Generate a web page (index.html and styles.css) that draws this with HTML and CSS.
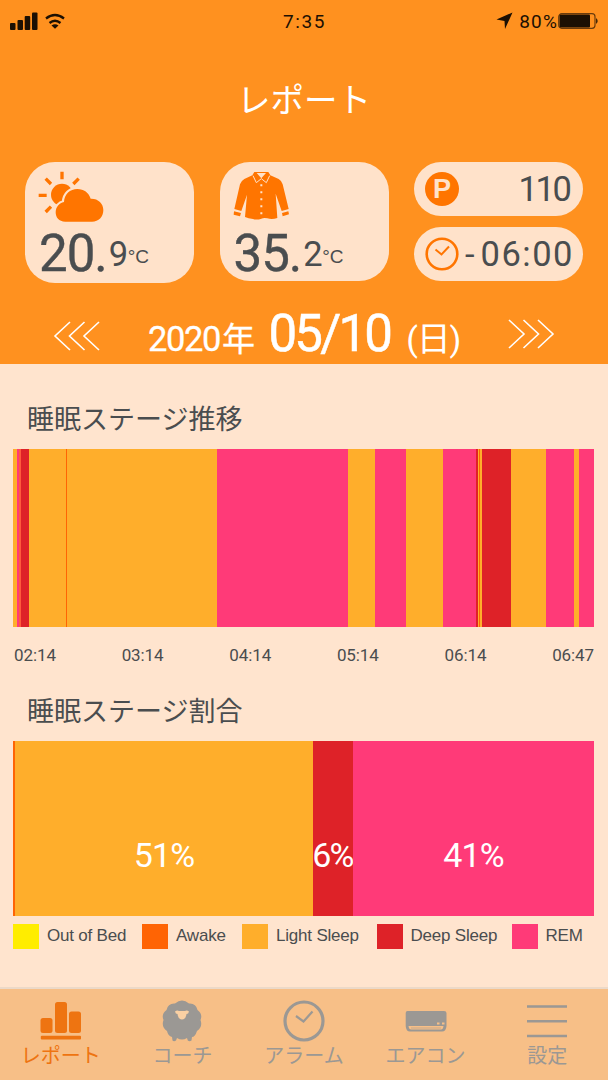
FILE: index.html
```html
<!DOCTYPE html>
<html lang="ja">

<head>
    <meta charset="UTF-8">
    <meta name="viewport" content="width=device-width, initial-scale=1.0">
    <title>レポート</title>
    <link rel="stylesheet" href="styles.css">
</head>

<body>

    <header class="header">
        <div class="status-bar">
            <div class="status-left">
                <svg width="56" height="20" viewBox="0 0 56 20">
                    <rect x="0" y="12" width="5.5" height="7" rx="1" />
                    <rect x="7.5" y="9" width="5.5" height="10" rx="1" />
                    <rect x="14.7" y="5" width="5.5" height="14" rx="1" />
                    <rect x="22" y="1.5" width="5.5" height="17.5" rx="1" />
                    <path d="M36 7.5 Q45 0.5 54 7.5 M39.5 12 Q45 7.5 50.5 12" fill="none" stroke="#1c1003" stroke-width="2.3" />
                    <path d="M41.5 14.5 Q45 12 48.5 14.5 L45 17.8 Z" />
                </svg>
            </div>
            <div class="status-time">7:35</div>
            <div class="status-right">
                <svg width="17" height="18" viewBox="0 0 17 18">
                    <path d="M0.5 7.5 L16.5 0.5 L9 17 L8.5 9 Z" />
                </svg>
                <span class="battery-text">80%</span>
                <svg width="41" height="18" viewBox="0 0 41 18">
                    <rect x="0.7" y="1.7" width="36.3" height="14.6" rx="3" fill="none" stroke="#6b3c0c" stroke-width="1.2" />
                    <rect x="1.5" y="2.5" width="30.5" height="13" rx="1" />
                    <path d="M38.2 6 Q41 9 38.2 12 Z" />
                </svg>
            </div>
        </div>

        <h1>レポート</h1>

        <div class="cards">
            <div class="card card-room">
                <svg width="66" height="52" viewBox="70 64 198 156">
                    <g stroke="#ff7500" stroke-width="10">
                        <path d="M142 66 V89 M93 87 L109 103 M192 87 L176 103 M72 137 H96 M93 187 L109 171" />
                    </g>
                    <circle cx="142" cy="135" r="33" />
                    <path d="M152 216 C132 216 123 203 123 188 C123 172 134 160 148 157 C149 134 166 118 188 118 C208 118 222 129 228 147 C250 146 266 161 266 181 C266 202 252 216 232 216 Z" stroke="#ffe2ca" stroke-width="13" paint-order="stroke" />
                </svg>
                <div class="temp">20.<span class="decimal">9</span><span class="unit">°C</span></div>
            </div>
            <div class="card card-bed">
                <svg width="57" height="49" viewBox="67 64 171 147">
                    <path d="M131 67 H173 L179 77 L204 88 Q213 93 216 104 L234 178 L213 184 L195 132 L200 205 Q184 211 170 206 Q160 203 152 207 Q139 212 127 208 Q113 206 103 202 L109 135 L92 184 L71 178 L88 104 Q92 93 101 88 L125 77 Z" />
                    <path d="M70 185 L91 190 L88 200 L69 195 Z M214 190 L233 185 L235 194 L216 200 Z" />
                    <path d="M138 70 H166 L152 86 Z" fill="#ffe2ca" />
                    <path d="M127 78 L137 99 L152 87 L167 99 L177 78" fill="none" stroke="#ffe2ca" stroke-width="3" />
                    <path d="M152 104 V200" fill="none" stroke="#ffe2ca" stroke-width="6" stroke-dasharray="6 15" />
                </svg>
                <div class="temp">35.<span class="decimal">2</span><span class="unit">°C</span></div>
            </div>
            <div class="pills">
                <div class="pill">
                    <span class="point-badge">P</span>
                    <span class="points"><span class="tight">11</span>0</span>
                </div>
                <div class="pill">
                    <svg width="34" height="34" viewBox="0 0 34 34">
                        <circle cx="17" cy="17" r="15.3" fill="none" stroke="#ff7500" stroke-width="2.6" />
                        <path d="M10.5 12.5 L16.5 17.5 L24 9.5" fill="none" stroke="#ff7500" stroke-width="2" />
                    </svg>
                    <span class="dash">-</span>
                    <span class="clock-time">06:00</span>
                </div>
            </div>
        </div>

        <div class="date-nav">
            <svg class="prev" width="48" height="30" viewBox="0 0 48 30">
                <path d="M17 1 L2 15 L17 29 M31.5 1 L16.5 15 L31.5 29 M46 1 L31 15 L46 29" />
            </svg>
            <div class="date">
                <span class="year">2020<span class="nen">年</span></span>
                <span class="day">05/10</span>
                <span class="weekday">(日)</span>
            </div>
            <svg class="next" width="48" height="30" viewBox="0 0 48 30">
                <path d="M2 1 L17 15 L2 29 M16.5 1 L31.5 15 L16.5 29 M31 1 L46 15 L31 29" />
            </svg>
        </div>
    </header>

    <main class="content">
        <h2>睡眠ステージ推移</h2>
        <div class="chart timeline" id="timeline"></div>
        <div class="time-labels">
            <span>02:14</span>
            <span>03:14</span>
            <span>04:14</span>
            <span>05:14</span>
            <span>06:14</span>
            <span>06:47</span>
        </div>

        <h2>睡眠ステージ割合</h2>
        <div class="chart ratio">
            <div class="awake"></div>
            <div class="light">51%</div>
            <div class="deep">6%</div>
            <div class="rem">41%</div>
        </div>
        <div class="legend">
            <div class="legend-item"><i class="out"></i>Out of Bed</div>
            <div class="legend-item"><i class="awake"></i>Awake</div>
            <div class="legend-item"><i class="light"></i>Light Sleep</div>
            <div class="legend-item"><i class="deep"></i>Deep Sleep</div>
            <div class="legend-item"><i class="rem"></i>REM</div>
        </div>
    </main>

    <nav class="tab-bar">
        <div class="tab active">
            <svg width="42" height="42" viewBox="0 0 42 42">
                <rect x="0.5" y="18" width="12" height="15" rx="2.5" />
                <rect x="15" y="2" width="12" height="31" rx="2.5" />
                <rect x="29" y="11.5" width="12" height="21.5" rx="2.5" />
                <rect x="0.8" y="35.8" width="40.2" height="3.6" rx="1" />
            </svg>
            <span>レポート</span>
        </div>
        <div class="tab">
            <svg width="42" height="42" viewBox="0 0 42 42">
                <path d="M14 3.5 Q21 -2.5 28 3.5 Q35 3 36.5 10 Q42 14 39.5 20 Q42 27 36 31 Q34 37 31 37 L30.5 40.5 Q28.5 42 26.8 40.5 L26 38 Q21 41 16 38 L15 40.5 Q13 42 11.5 40.5 L11 37 Q7 36 6 31 Q0 27 2.5 20 Q0 14 5.5 10 Q7 3 14 3.5 Z" />
                <path d="M14 11.5 Q16 10 18 11 H24 Q26 10 28 11.5 Q27.5 14 25.5 14 Q25 19 21 19.5 Q17 19 16.5 14 Q14.5 14 14 11.5 Z" fill="#fad0a3" />
            </svg>
            <span>コーチ</span>
        </div>
        <div class="tab">
            <svg width="42" height="42" viewBox="0 0 42 42">
                <circle cx="21" cy="21" r="19" fill="none" stroke="#9b9894" stroke-width="3.2" />
                <path d="M13 16 L20.5 21.5 L29.5 11.5" fill="none" stroke="#9b9894" stroke-width="2.2" />
            </svg>
            <span>アラーム</span>
        </div>
        <div class="tab">
            <svg width="42" height="42" viewBox="0 0 42 42">
                <path d="M2.5 11 H39 Q41.5 11 41.5 13 V26 Q41 31.5 37 31.5 H5 Q1 31.5 0.7 26 V13 Q0.7 11 2.5 11 Z" />
                <path d="M3.5 26 H38.5 Q38 29.5 36 29.5 H6 Q4 29.5 3.5 26 Z" fill="#f7bf87" />
                <path d="M32 23.5 H34.5 M37 23.5 H39.5" stroke="#f7bf87" stroke-width="2" />
                <path d="M6 28 H36" stroke="#b9a58f" stroke-width="0.8" />
            </svg>
            <span>エアコン</span>
        </div>
        <div class="tab">
            <svg width="42" height="42" viewBox="0 0 42 42">
                <path d="M1 6.5 H41 M1 21.3 H41 M1 36 H41" stroke="#9b9894" stroke-width="2.6" />
            </svg>
            <span>設定</span>
        </div>
    </nav>

    <script>
        // [stage, width] from 02:14 to 06:47
        const stages = [
            ['light', 4], ['rem', 2], ['rise', 2], ['deep', 8],
            ['light', 37], ['awake', 1], ['light', 150], ['rem', 131],
            ['light', 27], ['rem', 31], ['light', 37], ['rem', 33],
            ['deep', 2], ['light', 1], ['awake', 1], ['light', 2.5],
            ['deep', 28.5], ['light', 35], ['rem', 28], ['light', 5],
            ['rem', 15]
        ];
        const total = stages.reduce((sum, s) => sum + s[1], 0);
        const timeline = document.getElementById('timeline');

        stages.forEach(([stage, width]) => {
            const bar = document.createElement('div');
            bar.className = stage;
            bar.style.width = `${(width / total) * 100}%`;
            timeline.appendChild(bar);
        });
    </script>

</body>

</html>
```
FILE: styles.css
```css
* {
    box-sizing: border-box;
}

body {
    font-family: Roboto, 'Noto Sans CJK JP', sans-serif;
    background-color: #ffe4ce;
    color: #4a4d4f;
    margin: 0;
    width: 608px;
    height: 1080px;
    display: flex;
    flex-direction: column;
    overflow: hidden;
}

svg {
    display: block;
    flex: none;
}

/* Header */
.header {
    height: 364px;
    background-color: #ff911f;
    color: #fff;
}

.status-bar {
    height: 41px;
    padding: 0 9px 0 10px;
    display: grid;
    grid-template-columns: 1fr 60px 1fr;
    align-items: center;
    color: #1c1003;
    fill: #1c1003;
    font-size: 19px;
    letter-spacing: 1.6px;
}

.status-time {
    padding-top: 1px;
    text-align: center;
}

.status-right {
    display: flex;
    align-items: center;
    justify-content: flex-end;
}

.battery-text {
    margin: 1px 0 0 6px;
    letter-spacing: 1.2px;
}

h1 {
    margin: 0;
    height: 121px;
    line-height: 119px;
    font-size: 33.5px;
    font-weight: 400;
    text-align: center;
}

.cards {
    height: 122px;
    padding: 0 25px;
    display: flex;
    align-items: flex-start;
    justify-content: space-between;
    color: #4a4d4f;
    fill: #ff7500;
}

.card {
    width: 169px;
    height: 121px;
    padding: 9px 0 0 13px;
    border-radius: 30px;
    background-color: #ffe2ca;
}

.card-bed {
    height: 119px;
}

.card svg {
    height: 52px;
}

.card-bed svg {
    height: 49px;
    margin-bottom: 3px;
}

.temp {
    height: 60px;
    padding-left: 1px;
    line-height: 62px;
    font-size: 51px;
    letter-spacing: -1px;
    -webkit-text-stroke: 0.4px #4a4d4f;
    white-space: nowrap;
}

.decimal {
    margin-left: 2px;
    font-size: 34.5px;
    line-height: 1;
    letter-spacing: -0.5px;
    vertical-align: 5px;
    -webkit-text-stroke: 0;
}

.unit {
    font-family: 'Liberation Sans', Arial, sans-serif;
    font-size: 19px;
    line-height: 1;
    letter-spacing: 0;
    vertical-align: 8px;
    -webkit-text-stroke: 0;
}

.pills {
    display: flex;
    flex-direction: column;
    gap: 11px;
}

.pill {
    width: 169px;
    height: 54px;
    padding: 0 10px 0 11px;
    display: flex;
    align-items: center;
    justify-content: space-between;
    border-radius: 27px;
    background-color: #ffe2ca;
    font-size: 34.5px;
}

.point-badge {
    width: 34px;
    height: 34px;
    border-radius: 50%;
    background-color: #ff7500;
    color: #ffe2ca;
    font-family: 'Liberation Sans', Arial, sans-serif;
    font-size: 27px;
    font-weight: 700;
    line-height: 34px;
    text-align: center;
}

.points {
    padding-right: 1px;
}

.tight {
    letter-spacing: -2.3px;
}

.clock-time {
    letter-spacing: 1.5px;
    margin-right: -1px;
}

.date-nav {
    height: 80px;
    padding: 0 53px;
    display: flex;
    justify-content: space-between;
}

.date-nav svg {
    fill: none;
    stroke: #fff;
    stroke-width: 1.6;
    margin-top: 37px;
}

.date-nav .next {
    margin-top: 35px;
}

.date {
    display: flex;
    align-items: baseline;
    line-height: 100px;
    white-space: nowrap;
}

.year {
    font-size: 34.5px;
    letter-spacing: -1.4px;
    -webkit-text-stroke: 0.3px #fff;
}

.nen {
    font-size: 33px;
    margin-left: 2px;
}

.day {
    font-size: 51px;
    margin: 0 16px 0 15px;
    letter-spacing: -2.8px;
    -webkit-text-stroke: 0.5px #fff;
}

.weekday {
    font-size: 34px;
    letter-spacing: -1.2px;
}

/* Report */
.content {
    height: 623px;
    padding: 0 14px;
}

h2 {
    margin: 0;
    padding-left: 13px;
    height: 85px;
    line-height: 113px;
    font-size: 27px;
    font-weight: 400;
}

.chart {
    display: flex;
    height: 178px;
    margin: 0 0 0 -1px;
}

.chart div {
    flex: none;
}

.out {
    background-color: #ffed00;
}

.awake {
    background-color: #ff6404;
}

.light {
    background-color: #ffae2b;
}

.deep {
    background-color: #de2228;
}

.rem {
    background-color: #ff3a78;
}

.rise {
    background-color: #ff5a3c;
}

.time-labels {
    height: 29px;
    padding-top: 17px;
    display: flex;
    justify-content: space-between;
    font-size: 17px;
    line-height: 22px;
    letter-spacing: -0.1px;
}

.ratio {
    height: 175px;
    color: #fff;
    font-size: 34px;
    line-height: 229px;
    text-align: center;
    letter-spacing: -0.8px;
}

.ratio .awake {
    width: 2px;
}

.ratio .light {
    width: 298px;
}

.ratio .deep {
    width: 40px;
    letter-spacing: -1.8px;
    text-indent: -1px;
}

.ratio .rem {
    width: 241px;
}

.legend {
    margin: 8px 0 0 -1px;
    display: grid;
    grid-template-columns: 129px 100px 134.5px 135px auto;
    font-family: 'Liberation Sans', Arial, sans-serif;
    font-size: 17px;
    letter-spacing: -0.2px;
}

.legend-item {
    height: 25px;
    display: flex;
    align-items: center;
    line-height: 23px;
    padding-bottom: 2px;
    white-space: nowrap;
}

.legend-item i {
    width: 26px;
    height: 25px;
    margin: 2px 8px 0 0;
}

/* Tab bar */
.tab-bar {
    height: 93px;
    border-top: 2px solid #ecd9c8;
    background-color: #f7bf87;
    display: flex;
}

.tab {
    flex: 1;
    padding-top: 11px;
    display: flex;
    flex-direction: column;
    align-items: center;
    color: #9b9894;
    fill: #9b9894;
    font-size: 20px;
    line-height: 29px;
}

.tab.active {
    color: #ee7411;
    fill: #ee7411;
}
```
